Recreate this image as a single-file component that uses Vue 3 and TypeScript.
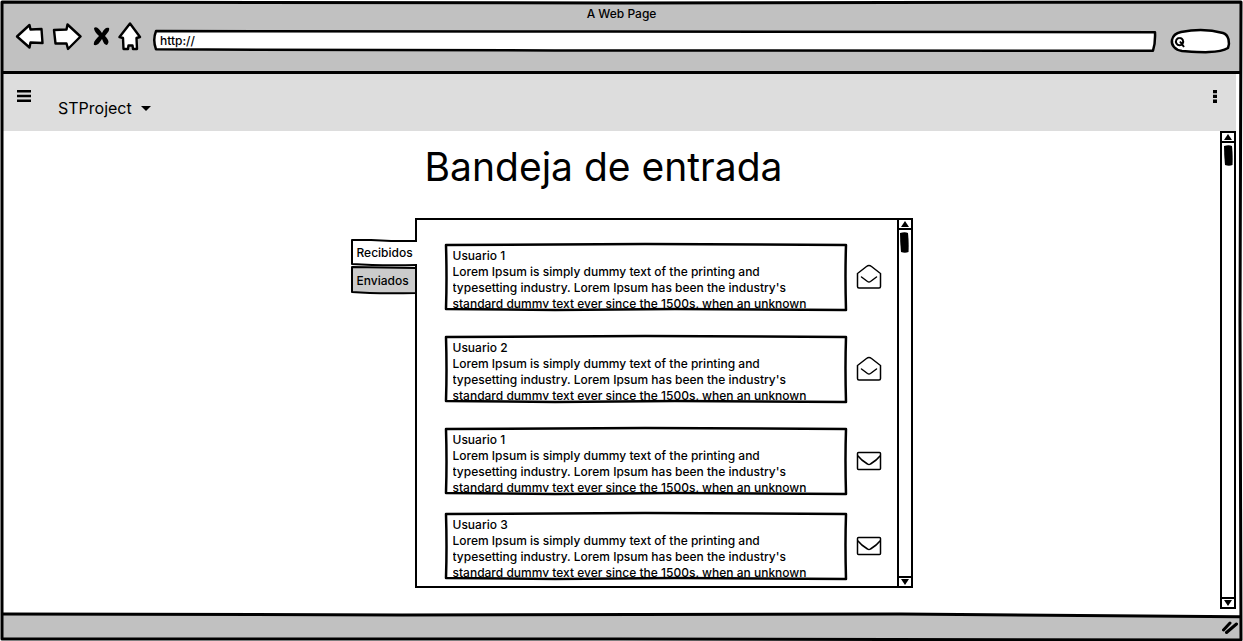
<script setup lang="ts">
interface Message {
  id: number
  user: string
  opened: boolean
}

const excerpt: string[] = [
  'Lorem Ipsum is simply dummy text of the printing and',
  "typesetting industry. Lorem Ipsum has been the industry's",
  'standard dummy text ever since the 1500s, when an unknown',
]

const messages: Message[] = [
  { id: 1, user: 'Usuario 1', opened: true },
  { id: 2, user: 'Usuario 2', opened: true },
  { id: 3, user: 'Usuario 1', opened: false },
  { id: 4, user: 'Usuario 3', opened: false },
]
</script>

<template>
  <div class="window">
    <header class="chrome">
      <div class="title">A Web Page</div>
      <div class="controls">
        <nav class="nav" aria-label="Navegador">
          <button type="button" class="icon-button" aria-label="Atrás">
            <svg width="30" height="30" viewBox="0 0 30 30" class="outline">
              <path d="M2 14.500 L14.500 3 L15.500 7.500 L26.500 7 L27.500 21 L15.500 20.500 L14.500 25.500 Z" />
            </svg>
          </button>
          <button type="button" class="icon-button" aria-label="Adelante">
            <svg width="30" height="30" viewBox="0 0 30 30" class="outline">
              <path d="M2 8 L14.500 7.500 L15.500 2.500 L28.500 14.500 L16 27 L14.500 21.500 L3.500 21.500 Z" />
            </svg>
          </button>
          <button type="button" class="icon-button stop" aria-label="Detener">
            <svg width="18" height="20" viewBox="0 0 18 20">
              <path d="M1 1 C4 -1 6 2 9 6 C11 2 13 0 16 1 C17 4 14 6 12 9 C15 12 17 15 14 18 C11 18 10 14 9 12 C7 15 5 19 1 18 C0 15 3 12 6 9 C3 6 1 4 1 1 Z" />
            </svg>
          </button>
          <button type="button" class="icon-button home" aria-label="Inicio">
            <svg width="24" height="30" viewBox="0 0 24 30" class="outline">
              <path d="M12 1.500 L22 15 L18.500 16 L19 27 L15 27 L14.500 23.500 L10.500 23.500 L10 27 L5.500 27 L5 16 L1.500 15 Z" />
            </svg>
          </button>
        </nav>
        <div class="address">
          <svg class="frame" viewBox="0 0 100 100" preserveAspectRatio="none" aria-hidden="true">
            <path class="filled thick" d="M0.200 5 L45 7 L99.900 10 Q99.950 60 99.700 94 L40 93 L0.200 88 Q-0.150 45 0.200 5 Z" />
          </svg>
          <input class="address-input" type="text" value="http://" aria-label="Dirección" />
        </div>
        <div class="search">
          <svg class="frame" viewBox="0 0 60 24" preserveAspectRatio="none" aria-hidden="true">
            <path class="filled thick" d="M11 3 C27 0 42 1 53 4 C59 6 60 14 58 19 C48 25 27 23 12 22 C5 21 1 16 2 11 C3 6 6 4 11 3 Z" />
            <path class="lens" d="M9.500 9 A3.600 3.600 0 1 0 9.600 9 M10 12.500 L14 18" />
          </svg>
          <input class="search-input" type="search" aria-label="Buscar" />
        </div>
      </div>
    </header>

    <div class="toolbar">
      <button type="button" class="icon-button menu" aria-label="Menú">
        <svg width="14" height="12" viewBox="0 0 14 12">
          <path d="M0 0 H14 V2.400 H0 Z M0 4.800 H14 V7.200 H0 Z M0 9.600 H14 V12 H0 Z" />
        </svg>
      </button>
      <button type="button" class="project">
        STProject
        <svg width="10" height="5" viewBox="0 0 10 5" aria-hidden="true"><path d="M0 0 H10 L5 5 Z" /></svg>
      </button>
      <button type="button" class="icon-button more" aria-label="Más opciones">
        <svg width="4" height="13" viewBox="0 0 4 13">
          <path d="M0 0 H4 V3.300 H0 Z M0 4.800 H4 V8.100 H0 Z M0 9.600 H4 V12.900 H0 Z" />
        </svg>
      </button>
    </div>

    <div class="page">
      <main class="content">
        <h1>Bandeja de entrada</h1>
        <section class="mailbox">
          <div class="tabs" role="tablist">
            <button type="button" class="tab active" role="tab" aria-selected="true">
              <svg class="frame" viewBox="0 0 64 28" preserveAspectRatio="none" aria-hidden="true">
                <path class="filled plain" d="M2 2 L66 3 L66 26 L2 25 Z" />
                <path class="line" d="M66 2 L40 2 L20 1 L1 1 L1 25 Q30 27 66 26" />
              </svg>
              <span>Recibidos</span>
            </button>
            <button type="button" class="tab" role="tab" aria-selected="false">
              <svg class="frame" viewBox="0 0 64 28" preserveAspectRatio="none" aria-hidden="true">
                <path class="filled gray" d="M1 0 L65 1 L65 26 Q25 27 1 25 Z" />
              </svg>
              <span>Enviados</span>
            </button>
          </div>
          <div class="panel">
            <ul class="messages">
              <li v-for="message in messages" :key="message.id" class="message">
                <article class="card">
                  <svg class="frame" viewBox="0 0 402 68" preserveAspectRatio="none" aria-hidden="true">
                    <path class="line thick" d="M1 2 L200 1 L401 2 Q400 32 401 67 L230 66 L110 67 L1 66 Q2 35 1 2 Z" />
                  </svg>
                  <div class="text">
                    <div>{{ message.user }}</div>
                    <div v-for="line in excerpt" :key="line">{{ line }}</div>
                  </div>
                </article>
                <svg v-if="message.opened" class="mail" width="26" height="26" viewBox="0 0 26 26" role="img" aria-label="Leído">
                  <path d="M1.500 9.500 L10.500 2.500 Q13 0.500 15.500 2.500 L24.500 9.500 V22.500 Q24.500 24 23 24 H3 Q1.500 24 1.500 22.500 Z" />
                  <path d="M5.500 13 L11.500 17.500 Q13 18.500 14.500 17.500 L20.500 13" />
                </svg>
                <svg v-else class="mail" width="26" height="20" viewBox="0 0 26 20" role="img" aria-label="No leído">
                  <rect x="1.500" y="1.500" width="23" height="17" rx="1" />
                  <path d="M2 5 Q5 9 11.500 13 Q13 14 14.500 13 Q21 9 24 5" />
                </svg>
              </li>
            </ul>
            <div class="scrollbar" aria-hidden="true">
              <div class="arrow"><svg width="8" height="6" viewBox="0 0 8 6"><path d="M4 0 L8 6 H0 Z" /></svg></div>
              <svg class="thumb" width="9" height="21" viewBox="0 0 9 21"><path d="M0 1 Q5 -0.500 8 1 Q9 10 8.500 20 Q5 21.500 1 20 Q0 10 0 1 Z" /></svg>
              <div class="arrow bottom"><svg width="8" height="6" viewBox="0 0 8 6"><path d="M0 0 H8 L4 6 Z" /></svg></div>
            </div>
          </div>
        </section>
      </main>
      <div class="scrollbar page-scroll" aria-hidden="true">
        <div class="arrow"><svg width="8" height="6" viewBox="0 0 8 6"><path d="M4 0 L8 6 H0 Z" /></svg></div>
        <svg class="thumb" width="9" height="21" viewBox="0 0 9 21"><path d="M0 1 Q5 -0.500 8 1 Q9 10 8.500 20 Q5 21.500 1 20 Q0 10 0 1 Z" /></svg>
        <div class="arrow bottom"><svg width="8" height="6" viewBox="0 0 8 6"><path d="M0 0 H8 L4 6 Z" /></svg></div>
      </div>
    </div>

    <footer class="status">
      <svg class="edge" viewBox="0 0 1240 28" preserveAspectRatio="none" aria-hidden="true">
        <path class="filled gray-chrome" d="M-5 2 L400 3 L900 2 L1245 5 L1245 40 L-5 40 Z" />
      </svg>
      <svg class="grip" width="16" height="13" viewBox="0 0 16 13" aria-hidden="true">
        <path d="M1.500 9 L8 2 M4.500 11.500 L14.500 3" />
      </svg>
    </footer>
    <svg class="frame outer" viewBox="0 0 1243 641" preserveAspectRatio="none" aria-hidden="true">
      <path class="line" d="M2 2 L620 3 L1241 2 L1240 320 L1241 639 L620 638 L2 638 L2 320 Z" />
    </svg>
  </div>
</template>

<style>
body {
  background: #fff;
}
</style>

<style scoped>
* {
  box-sizing: border-box;
}
.window {
  position: relative;
  display: flex;
  flex-direction: column;
  min-height: 100vh;
  padding: 3px;
  overflow: hidden;
  color: #000;
  font-family: Inter, "Liberation Sans", sans-serif;
  font-size: 12px;
  font-weight: 500;
  line-height: 16px;
}
svg {
  display: block;
  flex: none;
}
button,
input {
  margin: 0;
  padding: 0;
  border: 0;
  background: none;
  color: inherit;
  font: inherit;
}
.frame {
  position: absolute;
  inset: 0;
  width: 100%;
  height: 100%;
  overflow: visible;
  pointer-events: none;
}
.line,
.filled {
  fill: none;
  stroke: #000;
  stroke-width: 2px;
  stroke-linejoin: round;
  vector-effect: non-scaling-stroke;
}
.filled {
  fill: #fff;
}
.plain {
  stroke: none;
}
.gray {
  fill: #cbcbcb;
}
.thick {
  stroke-width: 2.500px;
}
.gray-chrome {
  fill: #c1c1c1;
  stroke-width: 3px;
}
.outer .line {
  stroke-width: 3px;
}
.chrome {
  height: 71px;
  padding-top: 3px;
  border-bottom: 3px solid #000;
  background: #c1c1c1;
}
.title {
  text-align: center;
}
.controls {
  display: flex;
  align-items: center;
  height: 30px;
  padding: 0 10px 0 12px;
}
.nav {
  display: flex;
  align-items: center;
  gap: 7px;
}
.icon-button {
  display: block;
}
.outline {
  fill: #fff;
  stroke: #000;
  stroke-width: 2.400px;
  stroke-linejoin: round;
}
.stop {
  margin-left: 4px;
}
.address {
  position: relative;
  flex: 1;
  height: 22px;
  margin: 8px 14px 0 12px;
}
.address-input {
  position: relative;
  display: block;
  width: 100%;
  height: 20px;
  padding-left: 6px;
}
.search {
  position: relative;
  width: 60px;
  height: 24px;
  margin-top: 8px;
}
.search-input {
  position: relative;
  display: block;
  width: 100%;
  height: 24px;
  padding: 0 8px 0 18px;
}
.lens {
  fill: none;
  stroke: #000;
  stroke-width: 2px;
}
.toolbar {
  display: flex;
  align-items: flex-start;
  height: 57px;
  margin-right: 4px;
  padding: 16px 19px 0 14px;
  background: #ddd;
}
.project {
  display: flex;
  align-items: center;
  gap: 9px;
  margin: 8px auto 0 27px;
  font-size: 16px;
  font-weight: 400;
  line-height: 20px;
}
.menu {
  flex: none;
}
.page {
  display: flex;
  flex: 1;
}
.content {
  display: flex;
  flex: 1;
  flex-direction: column;
  align-items: center;
}
h1 {
  margin: 12px 16px 0 0;
  font-size: 39px;
  font-weight: 400;
  line-height: 48px;
}
.mailbox {
  display: flex;
  align-items: flex-start;
  width: 562px;
  max-width: 100%;
  margin: 27px 0 24px 40px;
}
.tabs {
  z-index: 1;
  flex: none;
  width: 64px;
  margin-top: 21px;
}
.tab {
  position: relative;
  display: block;
  width: 64px;
  height: 28px;
  padding-left: 6px;
  text-align: left;
}
.tab span {
  position: relative;
}
.panel {
  display: flex;
  flex: 1;
  min-width: 0;
  border: 2px solid #000;
}
.messages {
  flex: 1;
  min-width: 0;
  margin: 0;
  padding: 23px 15px 6px 28px;
  list-style: none;
}
.message {
  display: flex;
  align-items: center;
  gap: 9px;
}
.message + .message {
  margin-top: 24px;
}
.message:last-child {
  margin-top: 17px;
}
.card {
  position: relative;
  flex: 1;
  min-width: 0;
  height: 68px;
  padding: 5px 4px 3px 8px;
}
.text {
  height: 60px;
  overflow: hidden;
  white-space: nowrap;
}
.mail {
  fill: none;
  stroke: #000;
  stroke-width: 1.500px;
  stroke-linecap: round;
}
.scrollbar {
  display: flex;
  flex: none;
  flex-direction: column;
  align-items: center;
  width: 14px;
  border-left: 2px solid #000;
}
.arrow {
  display: flex;
  align-items: center;
  justify-content: center;
  width: 100%;
  height: 10px;
  border-bottom: 2px solid #000;
}
.thumb {
  margin-top: 2px;
}
.bottom {
  margin-top: auto;
  border-top: 2px solid #000;
  border-bottom: 0;
}
.page-scroll {
  width: 16px;
  margin: 0 4px 3px 0;
  border: 2px solid #000;
}
.status {
  position: relative;
  display: flex;
  align-items: center;
  justify-content: flex-end;
  height: 27px;
  padding: 4px 2px 0 0;
}
.edge {
  position: absolute;
  inset: 0;
  width: 100%;
  height: 100%;
}
.grip {
  position: relative;
  fill: none;
  stroke: #000;
  stroke-width: 3px;
  stroke-linecap: round;
}
</style>
